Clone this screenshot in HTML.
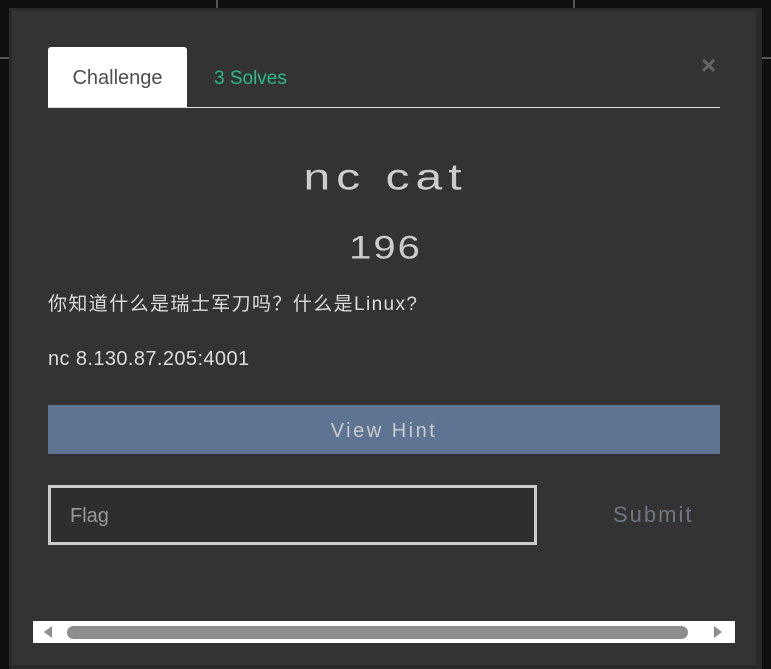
<!DOCTYPE html>
<html><head><meta charset="utf-8"><style>
*{margin:0;padding:0;box-sizing:border-box}
body{width:771px;height:669px;background:#101010;position:relative;overflow:hidden;font-family:"Liberation Sans","Noto Sans CJK SC",sans-serif}
.ln{position:absolute;background:#555}
.modal{position:absolute;left:9px;top:8px;width:753px;height:661px;background:#2a2a2a;}
.inner{position:absolute;left:3px;top:3px;width:744px;height:654px;background:#333}
.abs{position:absolute}
.tab{left:48px;top:47px;width:139px;height:61px;background:#fff;border-radius:3px 3px 0 0;color:#4a4f55;font-size:20px;text-align:center;line-height:62px}
.solves{left:214px;top:68px;color:#29b98a;font-size:19px}
.rule{left:48px;top:107px;width:672px;height:1px;background:#ddd}
.x{left:701px;top:50px;color:#666;font-size:26px;font-weight:bold}
.title{left:0;width:771px;text-align:center;color:#ccc;font-size:48px;letter-spacing:6px;top:150px;transform:scaleY(0.78);padding-left:0}
.pts{left:0;width:771px;text-align:center;color:#ccc;font-size:40px;top:226px;letter-spacing:2px;transform:scaleY(0.8)}
.desc{left:48px;top:289px;color:#ddd;font-size:19px;letter-spacing:1.4px}
.nc{left:48px;top:348px;color:#ddd;font-size:20px;letter-spacing:0.4px}
.btn{left:48px;top:405px;width:672px;height:49px;background:#5d7492;color:#ccc;text-align:center;line-height:52px;font-size:20px;letter-spacing:2.5px}
.inp{left:48px;top:485px;width:489px;height:60px;border:3px solid #ccc;background:#2e2e2e;color:#999;font-size:20px;padding:17px 0 0 19px}
.sub{left:613px;top:502px;color:#707780;font-size:22px;letter-spacing:2px}
.sb{left:33px;top:621px;width:702px;height:22px;background:#fff}
.thumb{left:67px;top:626px;width:621px;height:13px;background:#8d8d8d;border-radius:7px}
</style></head><body>
<div class="ln" style="left:216px;top:0;width:2px;height:9px"></div>
<div class="ln" style="left:573px;top:0;width:2px;height:9px"></div>
<div class="ln" style="left:0;top:57px;width:10px;height:2px"></div>
<div class="ln" style="left:761px;top:57px;width:10px;height:2px"></div>
<div class="modal"><div class="inner"></div></div>
<div class="abs tab">Challenge</div>
<div class="abs solves">3 Solves</div>
<div class="abs rule"></div>
<div class="abs x">×</div>
<div class="abs title">nc cat</div>
<div class="abs pts">196</div>
<div class="abs desc">你知道什么是瑞士军刀吗？什么是Linux?</div>
<div class="abs nc">nc 8.130.87.205:4001</div>
<div class="abs btn">View Hint</div>
<div class="abs inp">Flag</div>
<div class="abs sub">Submit</div>
<div class="abs sb"></div>
<div class="abs thumb"></div>
<div class="abs" style="left:44px;top:626px;width:0;height:0;border-top:6px solid transparent;border-bottom:6px solid transparent;border-right:8px solid #8d8d8d"></div>
<div class="abs" style="left:714px;top:626px;width:0;height:0;border-top:6px solid transparent;border-bottom:6px solid transparent;border-left:8px solid #8d8d8d"></div>
</body></html>
